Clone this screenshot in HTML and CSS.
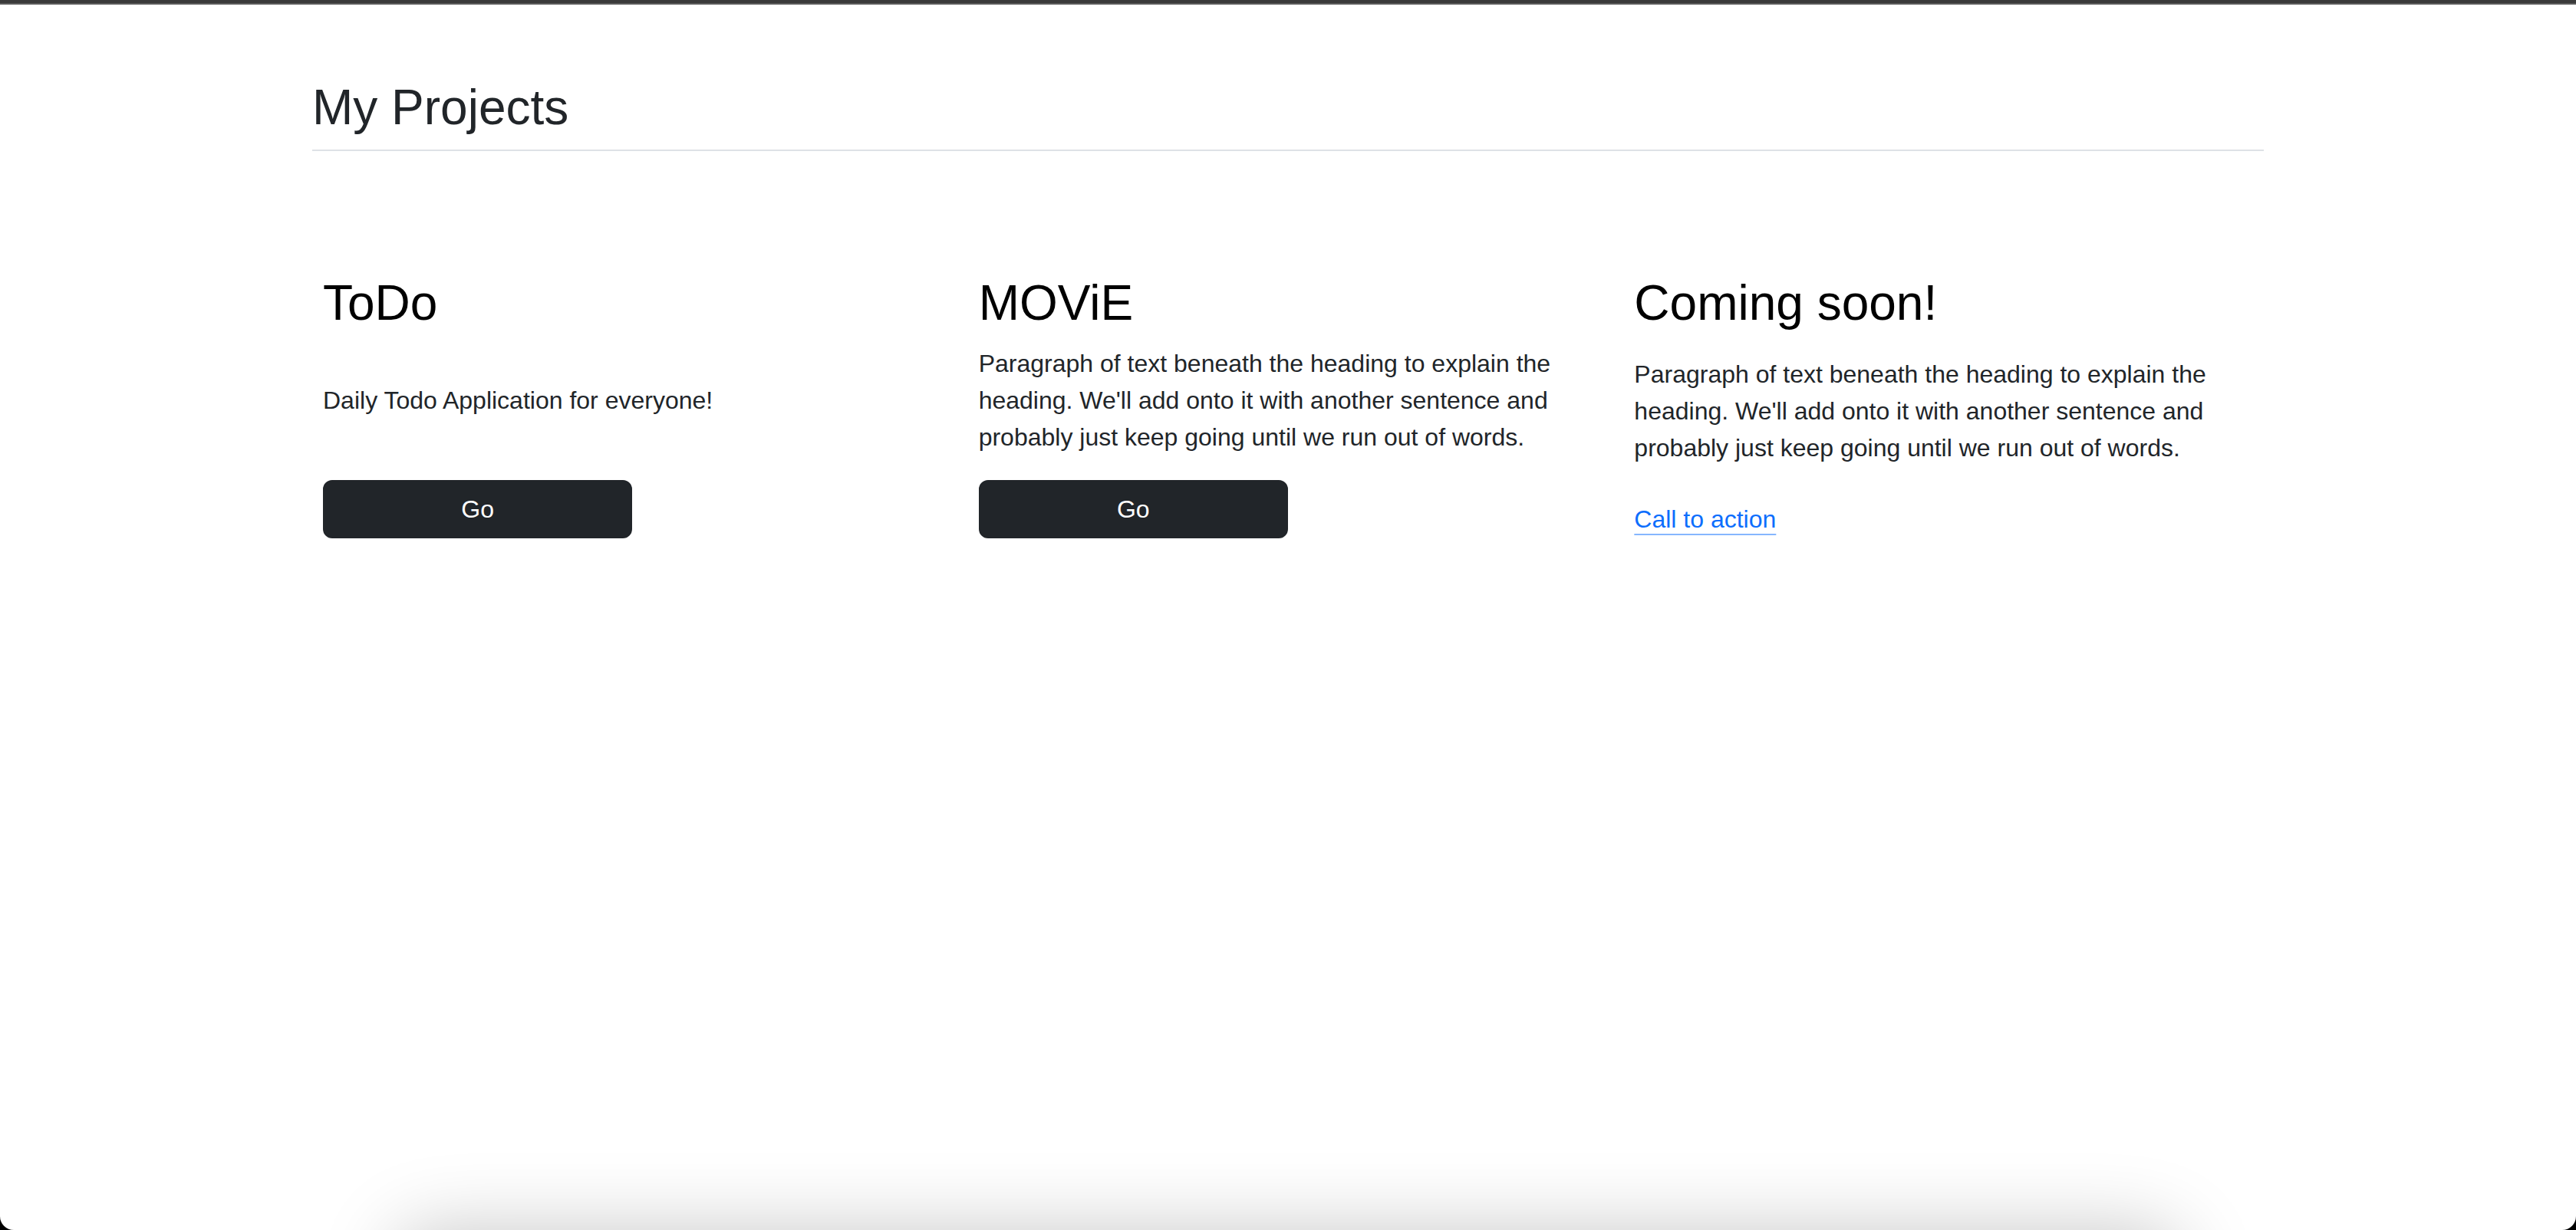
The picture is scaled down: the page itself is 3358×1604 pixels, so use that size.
FILE: index.html
```html
<!DOCTYPE html>
<html lang="en">
<head>
<meta charset="utf-8">
<title>My Projects</title>
<link rel="stylesheet" href="styles.css">
</head>
<body>
<div class="chrome-bar"></div>
<main class="container">
  <h2 class="page-title">My Projects</h2>
  <div class="projects">
    <div class="project">
      <h3 class="project-title">ToDo</h3>
      <p class="project-text project-text--padded">Daily Todo Application for everyone!</p>
      <a class="btn" href="#">Go</a>
    </div>
    <div class="project">
      <h3 class="project-title">MOViE</h3>
      <p class="project-text">Paragraph of text beneath the heading to explain the heading. We'll add onto it with another sentence and probably just keep going until we run out of words.</p>
      <a class="btn" href="#">Go</a>
    </div>
    <div class="project">
      <h3 class="project-title">Coming soon!</h3>
      <p class="project-text project-text--offset">Paragraph of text beneath the heading to explain the heading. We'll add onto it with another sentence and probably just keep going until we run out of words.</p>
      <a class="cta" href="#">Call to action</a>
    </div>
  </div>
</main>
<div class="window-shadow"></div>
<div class="window-frame"></div>
</body>
</html>
```
FILE: styles.css
```css
html, body {
  margin: 0;
  background: #fff;
}

body {
  font-family: "Liberation Sans", Arial, Helvetica, sans-serif;
  font-size: 32px;
  line-height: 1.5;
  color: #212529;
  overflow: hidden;
}

.chrome-bar {
  height: 6px;
  background: linear-gradient(#3a3a3a 0, #3a3a3a 4px, #5b5b5b 4px, #5b5b5b 6px);
}

.container {
  max-width: 2544px;
  margin: 0 auto;
  padding: 96px 0;
}

.page-title {
  margin: 0;
  font-size: 64px;
  font-weight: 400;
  line-height: 1.2;
  color: #212529;
  padding-bottom: 16px;
  border-bottom: 2px solid #dee2e6;
}

.projects {
  display: grid;
  grid-template-columns: repeat(3, 1fr);
  margin: 0 -10px;
  padding-top: 160px;
}

.project {
  padding: 0 24px;
  min-width: 0;
}

.project-title {
  margin: 0 0 16px;
  font-size: 64px;
  font-weight: 400;
  line-height: 1.2;
  color: #000;
}

.project-text {
  margin: 0 0 32px;
}

.project-text--padded {
  padding: 48px 0;
}

.project-text--offset {
  padding-top: 14px;
}

.btn {
  display: block;
  box-sizing: border-box;
  width: 50%;
  padding: 12px 24px;
  border: 2px solid #212529;
  border-radius: 12px;
  background: #212529;
  color: #fff;
  text-align: center;
  text-decoration: none;
  line-height: 48px;
}

.cta {
  display: inline-block;
  margin-top: 13px;
  color: #0d6efd;
  text-decoration: underline;
  text-decoration-color: rgba(13, 110, 253, 0.5);
  text-decoration-thickness: 2px;
  text-underline-offset: 0.25em;
}

.window-shadow {
  position: fixed;
  left: 515px;
  right: 515px;
  top: 100vh;
  height: 200px;
  border-radius: 48px;
  box-shadow: 0 0 100px rgba(0, 0, 0, 0.22);
  pointer-events: none;
}

.window-frame {
  position: fixed;
  top: 0;
  left: 0;
  right: 0;
  bottom: 0;
  border-radius: 0 0 18px 18px;
  box-shadow: 0 0 0 40px #000;
  pointer-events: none;
}
```
